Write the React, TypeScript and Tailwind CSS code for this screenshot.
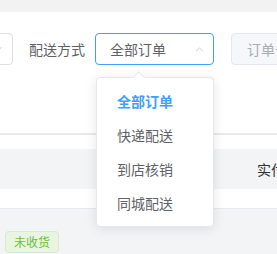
import { ChevronUp, ChevronDown } from "lucide-react";

const options = ["全部订单", "快递配送", "到店核销", "同城配送"];

const SelectMenu = () => (
  <div className="absolute left-[96px] top-[77px] w-[118px] rounded border border-[#e4e7ed] bg-white py-[6px] shadow-[0_2px_12px_0_rgba(0,0,0,0.1)]">
    {/* popper arrow */}
    <div className="absolute left-[37px] top-[-5px] h-[9px] w-[9px] rotate-45 border-l border-t border-[#e4e7ed] bg-white" />
    {options.map((o, i) => (
      <div
        key={o}
        className={
          i === 0
            ? "relative flex h-[34px] items-center pl-5 text-[14px] font-bold text-[#409eff]"
            : "relative flex h-[34px] items-center pl-5 text-[14px] text-[#606266]"
        }
      >
        {o}
      </div>
    ))}
  </div>
);

export default function App() {
  return (
    <div
      className="relative h-[254px] w-[277px] overflow-hidden bg-[#f3f4f6]"
      style={{ fontFamily: '"Noto Sans CJK SC", "Noto Sans", sans-serif' }}
    >
      <div className="h-[12px] bg-[#f2f2f2]" />

      <div className="bg-white">
        <div className="flex items-center pt-[21px]">
          <div className="ml-[-107px] flex h-[32px] w-[120px] shrink-0 items-center justify-end rounded border border-[#dcdfe6] pr-[8px]">
            <ChevronDown className="h-[12px] w-[12px] text-[#c0c4cc]" />
          </div>
          <span className="ml-[16px] shrink-0 text-[14px] text-[#606266]">配送方式</span>
          <div className="ml-[10px] flex h-[32px] w-[119px] shrink-0 items-center justify-between rounded border border-[#409eff] pl-[14px] pr-[7px] text-[14px] text-[#606266]">
            <span>全部订单</span>
            <ChevronUp className="h-[13px] w-[13px] text-[#c0c4cc]" strokeWidth={1.5} />
          </div>
          <div className="ml-[17px] flex h-[32px] w-[120px] shrink-0 items-center rounded border border-[#e4e7ed] bg-[#f5f7fa] pl-[15px] text-[14px] text-[#a8abb2]">
            订单号
          </div>
        </div>
        <div className="h-[68px]" />
        <div className="h-[2px] bg-[#e7e9ee]" />
        <div className="h-[14px]" />
        <div className="flex h-[40px] items-center justify-end bg-[#f3f4f6] text-[14px] text-[#303133]">
          <span className="mr-[-8px]">实付</span>
        </div>
        <div className="h-[20px] border-b border-[#e7e9ee]" />
      </div>

      <div className="pl-[5px] pt-[19px]">
        <span className="inline-flex h-[22px] items-center rounded border border-[#d6edc8] bg-[#e9f5e0] px-[8px] text-[12px] text-[#67c23a]">
          未收货
        </span>
      </div>

      <SelectMenu />
    </div>
  );
}
